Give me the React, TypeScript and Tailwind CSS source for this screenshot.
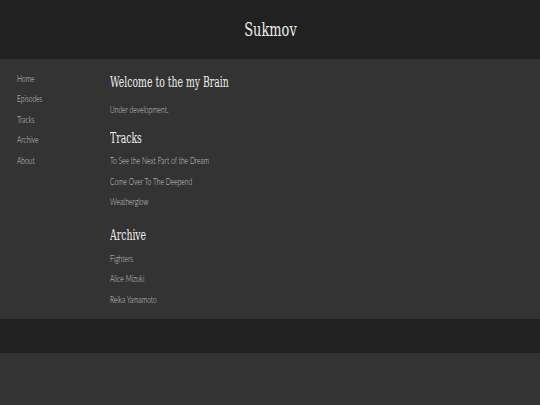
import React from "react";

const slab = "[font-family:'DejaVu_Serif',serif]";

function T({ children, className = "" }: { children: React.ReactNode; className?: string }) {
  return <span className={`inline-block origin-left whitespace-nowrap ${className}`}>{children}</span>;
}

export default function App() {
  const nav = ["Home", "Episodes", "Tracks", "Archive", "About"];
  const tracks = ["To See the Next Part of the Dream", "Come Over To The Deepend", "Weatherglow"];
  const archive = ["Fighters", "Alice Mizuki", "Reika Yamamoto"];
  return (
    <div className="min-h-[405px] bg-[#333333] font-['Lato',sans-serif]">
      <header className="h-[59px] bg-[#212121] flex items-center justify-center">
        <span className={`inline-block origin-center scale-x-[0.72] text-[18px] text-[#eeeeee] ${slab}`}>Sukmov</span>
      </header>
      <main className="flex h-[260px] bg-[#333333]">
        <nav className="w-[110px] pl-[17px] pt-[10px] flex flex-col">
          {nav.map((n) => (
            <div key={n} className="leading-[20.4px] text-[9px] font-light text-[#d0d0d0]">
              <T className="scale-x-[0.74]">{n}</T>
            </div>
          ))}
        </nav>
        <div className="flex flex-col pt-[13px]">
          <h1 className={`leading-[20px] text-[14px] text-[#f0f0f0] ${slab}`}>
            <T className="scale-x-[0.665]">Welcome to the my Brain</T>
          </h1>
          <p className="mt-[8px] leading-[20px] text-[9px] font-light text-[#d0d0d0]">
            <T className="scale-x-[0.74]">Under development.</T>
          </p>
          <h2 className={`mt-[8px] leading-[20px] text-[14px] text-[#f0f0f0] ${slab}`}>
            <T className="scale-x-[0.665]">Tracks</T>
          </h2>
          <ul className="mt-[3.25px]">
            {tracks.map((t) => (
              <li key={t} className="leading-[20.5px] text-[9px] font-light text-[#d0d0d0]">
                <T className="scale-x-[0.74]">{t}</T>
              </li>
            ))}
          </ul>
          <h2 className={`mt-[12.25px] leading-[20px] text-[14px] text-[#f0f0f0] ${slab}`}>
            <T className="scale-x-[0.665]">Archive</T>
          </h2>
          <ul className="mt-[3.75px]">
            {archive.map((t) => (
              <li key={t} className="leading-[20.5px] text-[9px] font-light text-[#d0d0d0]">
                <T className="scale-x-[0.74]">{t}</T>
              </li>
            ))}
          </ul>
        </div>
      </main>
      <footer className="h-[34px] bg-[#212121]" />
    </div>
  );
}
